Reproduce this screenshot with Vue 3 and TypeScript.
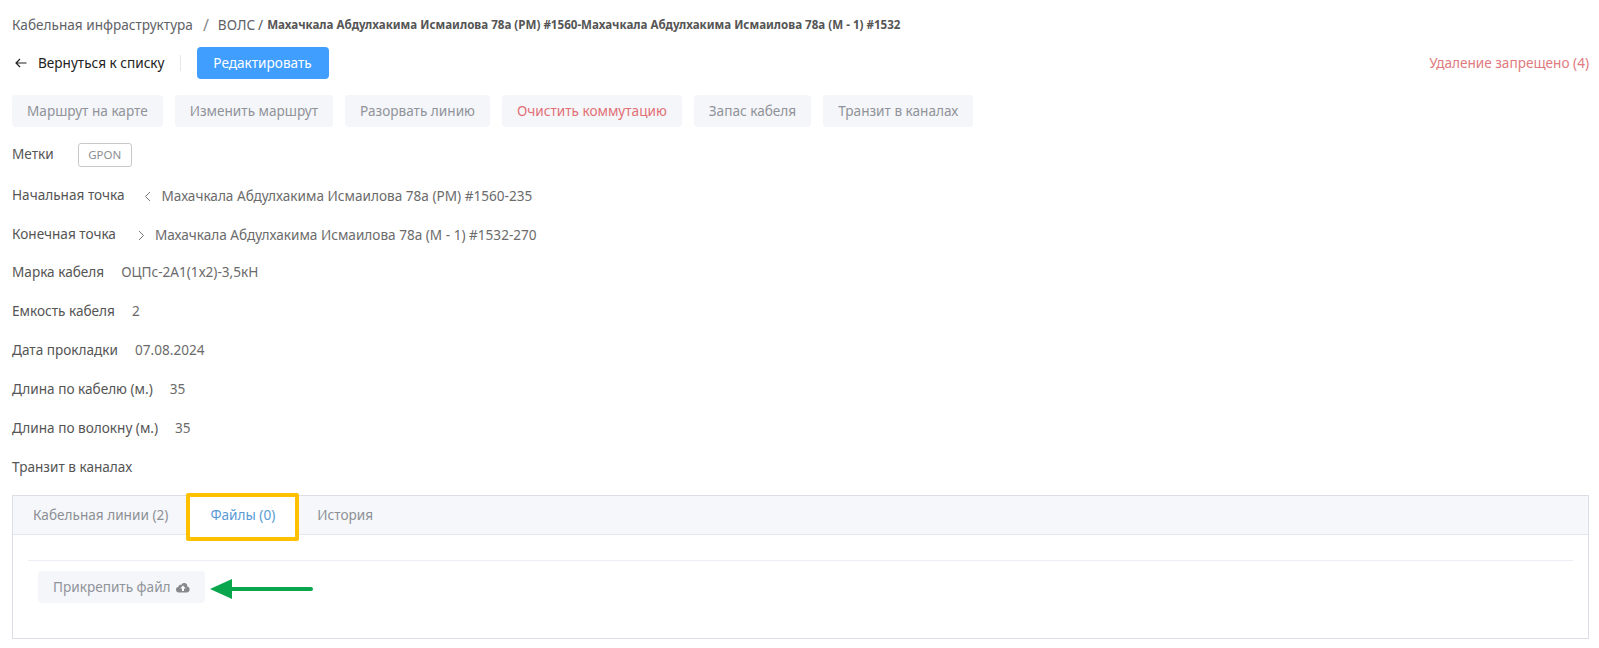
<template>
  <div class="page">
    <div class="crumbs">
      <span class="crumb">Кабельная инфраструктура</span>
      <span class="slash">/</span>
      <span class="crumb">ВОЛС</span>
      <span class="slash-small">/</span>
      <b class="current">Махачкала Абдулхакима Исмаилова 78а (РМ) #1560-Махачкала Абдулхакима Исмаилова 78а (М - 1) #1532</b>
    </div>

    <div class="toolbar">
      <div class="back">
        <svg width="14" height="12" viewBox="0 0 14 12" fill="none" stroke="#222" stroke-width="1.2">
          <path d="M12.5 6H2M6 2 2 6l4 4" />
        </svg>
        <span>Вернуться к списку</span>
      </div>
      <button class="edit">Редактировать</button>
      <span class="denied">Удаление запрещено (4)</span>
    </div>

    <div class="actions">
      <button v-for="a in actions" :key="a.label" class="action" :class="{ danger: a.danger }">{{ a.label }}</button>
    </div>

    <div class="row tags-row">
      <span class="label">Метки</span>
      <span class="tag">GPON</span>
    </div>

    <div class="row point start">
      <span class="label">Начальная точка</span>
      <svg width="7" height="11" viewBox="0 0 7 11" fill="none" stroke="#777" stroke-width="1"><path d="M6 1 1.5 5.5 6 10" /></svg>
      <span class="value">Махачкала Абдулхакима Исмаилова 78а (РМ) #1560-235</span>
    </div>
    <div class="row point end">
      <span class="label">Конечная точка</span>
      <svg width="7" height="11" viewBox="0 0 7 11" fill="none" stroke="#777" stroke-width="1"><path d="M1 1l4.5 4.5L1 10" /></svg>
      <span class="value">Махачкала Абдулхакима Исмаилова 78а (М - 1) #1532-270</span>
    </div>

    <div v-for="f in fields" :key="f.label" class="row field">
      <span class="label">{{ f.label }}</span>
      <span class="value">{{ f.value }}</span>
    </div>

    <div class="panel">
      <div class="tabs">
        <div class="tab">Кабельная линии (2)</div>
        <div class="tab active">Файлы (0)</div>
        <div class="tab">История</div>
        <div class="highlight"></div>
      </div>
      <div class="body">
        <div class="divider"></div>
        <div class="attach-row">
          <button class="attach">
            Прикрепить файл
            <svg width="14" height="11" viewBox="0 0 14 11" fill="#85888d">
              <path d="M11.3 4.6A3.2 3.2 0 0 0 5.2 2.9a2 2 0 0 0-2.7 1.8A2.9 2.9 0 0 0 3.3 10.5h7.9a3 3 0 0 0 .1-5.9Z" />
              <path d="M7 3.6 9.8 6.6H8v2.4H6V6.6H4.2Z" fill="#fff" />
            </svg>
          </button>
          <svg class="arrow" width="103" height="20" viewBox="0 0 103 20">
            <path d="M0 10 22 0v8h79a2 2 0 0 1 0 4H22v8Z" fill="#0aa64e" />
          </svg>
        </div>
      </div>
    </div>
  </div>
</template>

<script setup lang="ts">
const actions = [
  { label: 'Маршрут на карте' },
  { label: 'Изменить маршрут' },
  { label: 'Разорвать линию' },
  { label: 'Очистить коммутацию', danger: true },
  { label: 'Запас кабеля' },
  { label: 'Транзит в каналах' },
]

const fields = [
  { label: 'Марка кабеля', value: 'ОЦПс-2А1(1х2)-3,5кН' },
  { label: 'Емкость кабеля', value: '2' },
  { label: 'Дата прокладки', value: '07.08.2024' },
  { label: 'Длина по кабелю (м.)', value: '35' },
  { label: 'Длина по волокну (м.)', value: '35' },
  { label: 'Транзит в каналах', value: '' },
]
</script>

<style>
html,
body {
  margin: 0;
  background: #fff;
}
</style>

<style scoped>
.page {
  height: 648px;
  box-sizing: border-box;
  padding: 16px 10px 0 12px;
  font-family: 'Noto Sans', sans-serif;
  font-size: 13.6px;
  line-height: 18px;
  color: #555;
  overflow: hidden;
}

.crumbs {
  display: flex;
  align-items: center;
  height: 18px;
}

.crumb {
  color: #606266;
}

.slash {
  margin: 0 9px 0 10px;
  color: #888;
  font-size: 16px;
}

.slash-small {
  margin: 0 4px 0 3px;
  color: #555;
}

.current {
  font-size: 11.6px;
  font-weight: 700;
  color: #555;
}

.toolbar {
  display: flex;
  align-items: center;
  margin-top: 13px;
  height: 32px;
}

.back {
  display: flex;
  align-items: center;
  gap: 10px;
  padding: 0 15px 0 2px;
  border-right: 1px solid #e8e8e8;
  height: 16px;
  color: #222;
}

.edit {
  margin-left: 16px;
  width: 132px;
  height: 32px;
  border: 0;
  border-radius: 4px;
  background: #409eff;
  color: #fff;
  font: inherit;
}

.denied {
  margin-left: auto;
  color: #e07a80;
}

.actions {
  display: flex;
  gap: 12px;
  margin-top: 16px;
}

.action {
  height: 32px;
  padding: 0 15px;
  border: 0;
  border-radius: 4px;
  background: #f5f6f9;
  color: #909399;
  font: inherit;
}

.action.danger {
  color: #e26f76;
}

.row {
  display: flex;
  align-items: center;
}

.label {
  color: #555;
}

.value {
  color: #6b6b6b;
}

.tags-row {
  margin-top: 16px;
  height: 24px;
  gap: 24px;
}

.tags-row .label,
.point .label {
  margin-bottom: 2px;
}

.tag {
  width: 54px;
  height: 24px;
  box-sizing: border-box;
  display: flex;
  align-items: center;
  justify-content: center;
  border: 1px solid #c8c9cc;
  border-radius: 3px;
  color: #8d9095;
  font-size: 11.5px;
}

.point {
  height: 18px;
}

.start {
  margin-top: 20px;
}

.start svg {
  margin: 0 11px 0 19px;
}

.end {
  margin-top: 21px;
}

.end svg {
  margin: 0 10px 0 22px;
}

.field {
  height: 18px;
  margin-top: 21px;
  gap: 17px;
}

.end + .field {
  margin-top: 19px;
}

.panel {
  margin-top: 19px;
  height: 144px;
  box-sizing: border-box;
  border: 1px solid #dcdfe6;
}

.tabs {
  position: relative;
  display: flex;
  height: 38px;
  background: #f5f7fa;
  border-bottom: 1px solid #e4e7ed;
}

.tab {
  padding: 0 20px;
  line-height: 38px;
  color: #8d9095;
}

/* white area runs over the bottom line of the tab bar */
.tab.active {
  width: 109px;
  height: 39px;
  box-sizing: border-box;
  text-align: center;
  background: #fff;
  color: #5a9bd5;
  padding: 0;
}

.highlight {
  position: absolute;
  left: 173px;
  top: -3px;
  width: 113px;
  height: 48px;
  box-sizing: border-box;
  border: 4px solid #ffc000;
  border-radius: 2px;
}

.body {
  padding: 25px 15px 0;
}

.divider {
  border-top: 1px solid #ebeef5;
}

.attach-row {
  display: flex;
  align-items: center;
  margin-top: 10px;
  padding-left: 10px;
}

.attach {
  display: flex;
  align-items: center;
  gap: 5px;
  height: 32px;
  padding: 0 15px;
  border: 0;
  border-radius: 4px;
  background: #f5f6f9;
  color: #909399;
  font: inherit;
}

.arrow {
  margin: 4px 0 0 5px;
  flex: none;
}
</style>
